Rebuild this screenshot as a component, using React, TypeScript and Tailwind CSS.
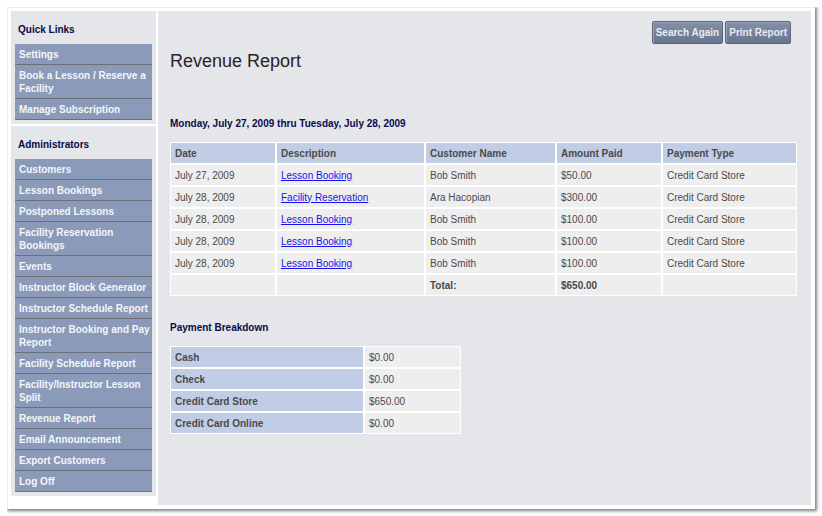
const quickLinks = ["Settings", "Book a Lesson / Reserve a Facility", "Manage Subscription"]

const adminLinks = [
    "Customers",
    "Lesson Bookings",
    "Postponed Lessons",
    "Facility Reservation Bookings",
    "Events",
    "Instructor Block Generator",
    "Instructor Schedule Report",
    "Instructor Booking and Pay Report",
    "Facility Schedule Report",
    "Facility/Instructor Lesson Split",
    "Revenue Report",
    "Email Announcement",
    "Export Customers",
    "Log Off",
]

const payments = [
    { date: "July 27, 2009", description: "Lesson Booking", customer: "Bob Smith", amount: "$50.00" },
    { date: "July 28, 2009", description: "Facility Reservation", customer: "Ara Hacopian", amount: "$300.00" },
    { date: "July 28, 2009", description: "Lesson Booking", customer: "Bob Smith", amount: "$100.00" },
    { date: "July 28, 2009", description: "Lesson Booking", customer: "Bob Smith", amount: "$100.00" },
    { date: "July 28, 2009", description: "Lesson Booking", customer: "Bob Smith", amount: "$100.00" },
]

const breakdown = [
    { type: "Cash", amount: "$0.00" },
    { type: "Check", amount: "$0.00" },
    { type: "Credit Card Store", amount: "$650.00" },
    { type: "Credit Card Online", amount: "$0.00" },
]

const cell = "h-[22px] border border-white bg-[#eeeeee] px-1"
const headCell = "h-[22px] border border-white bg-[#c1cde4] px-1 font-bold"

export default function App() {
    return (
        <div className="min-h-screen bg-white p-[7px] font-['Liberation_Sans',Arial,sans-serif] text-[10px] leading-[13px] text-[#4a4a4a]">
            <div className="flex min-h-[calc(100vh-14px)] gap-[2px] border-t border-l border-[#ececec] bg-white p-[3px] pr-1 pb-1 shadow-[1px_1px_3px_1px_rgba(0,0,0,0.5)] [clip-path:inset(0_-7px_-7px_0)]">
                <aside className="flex w-[145px] shrink-0 flex-col gap-[2px]">
                    <LinkPanel title="Quick Links" links={quickLinks} />
                    <LinkPanel title="Administrators" links={adminLinks} />
                </aside>
                <main className="min-w-0 flex-1 bg-[#e4e6ea] pt-[10px] pr-[14px] pb-4 pl-3">
                    <div className="flex justify-end gap-[2px] pr-[6px]">
                        <ActionButton label="Search Again" />
                        <ActionButton label="Print Report" />
                    </div>
                    <h1 className="mt-[5px] text-[18px] leading-6 text-[#2a2226]">Revenue Report</h1>
                    <h2 className="mt-11 mb-3 font-bold text-[#0a0a48]">
                        Monday, July 27, 2009 thru Tuesday, July 28, 2009
                    </h2>
                    <table className="w-full table-fixed border-separate border-spacing-0 text-left">
                        <thead>
                            <tr>
                                <th className={`${headCell} w-[106px]`}>Date</th>
                                <th className={`${headCell} w-[149px]`}>Description</th>
                                <th className={`${headCell} w-[131px]`}>Customer Name</th>
                                <th className={`${headCell} w-[106px]`}>Amount Paid</th>
                                <th className={headCell}>Payment Type</th>
                            </tr>
                        </thead>
                        <tbody>
                            {payments.map((item, i) => (
                                <tr key={i}>
                                    <td className={cell}>{item.date}</td>
                                    <td className={cell}>
                                        <a href="#" className="text-[#1a10ee] underline">
                                            {item.description}
                                        </a>
                                    </td>
                                    <td className={cell}>{item.customer}</td>
                                    <td className={cell}>{item.amount}</td>
                                    <td className={cell}>Credit Card Store</td>
                                </tr>
                            ))}
                            <tr className="font-bold">
                                <td className={cell}></td>
                                <td className={cell}></td>
                                <td className={cell}>Total:</td>
                                <td className={cell}>$650.00</td>
                                <td className={cell}></td>
                            </tr>
                        </tbody>
                    </table>
                    <h2 className="mt-[25px] mb-3 font-bold text-[#0a0a48]">Payment Breakdown</h2>
                    <table className="w-[291px] table-fixed border-separate border-spacing-0 text-left">
                        <tbody>
                            {breakdown.map((item) => (
                                <tr key={item.type}>
                                    <th scope="row" className={`${headCell} w-2/3`}>
                                        {item.type}
                                    </th>
                                    <td className={cell}>{item.amount}</td>
                                </tr>
                            ))}
                        </tbody>
                    </table>
                </main>
            </div>
        </div>
    )
}

function LinkPanel({ title, links }: { title: string; links: string[] }) {
    return (
        <nav className="bg-[#e4e6ea] px-1 pb-1">
            <h2 className="px-[3px] pt-3 pb-2 font-bold text-[#0a0a48]">{title}</h2>
            <ul>
                {links.map((link) => (
                    <li key={link}>
                        <a
                            href="#"
                            className="block border-b border-[#6b7078] bg-[#8a9ab8] pt-1 pb-[3px] pl-1 font-bold text-[#f4f6fa]"
                        >
                            {link}
                        </a>
                    </li>
                ))}
            </ul>
        </nav>
    )
}

function ActionButton({ label }: { label: string }) {
    return (
        <button
            type="button"
            className="h-[23px] rounded-[2px] border border-[#5f6374] bg-linear-to-b from-[#8490a8] to-[#68758f] px-[3px] font-bold text-[#e8eaf0] shadow-[inset_1px_1px_0_#98a2b6]"
        >
            {label}
        </button>
    )
}
